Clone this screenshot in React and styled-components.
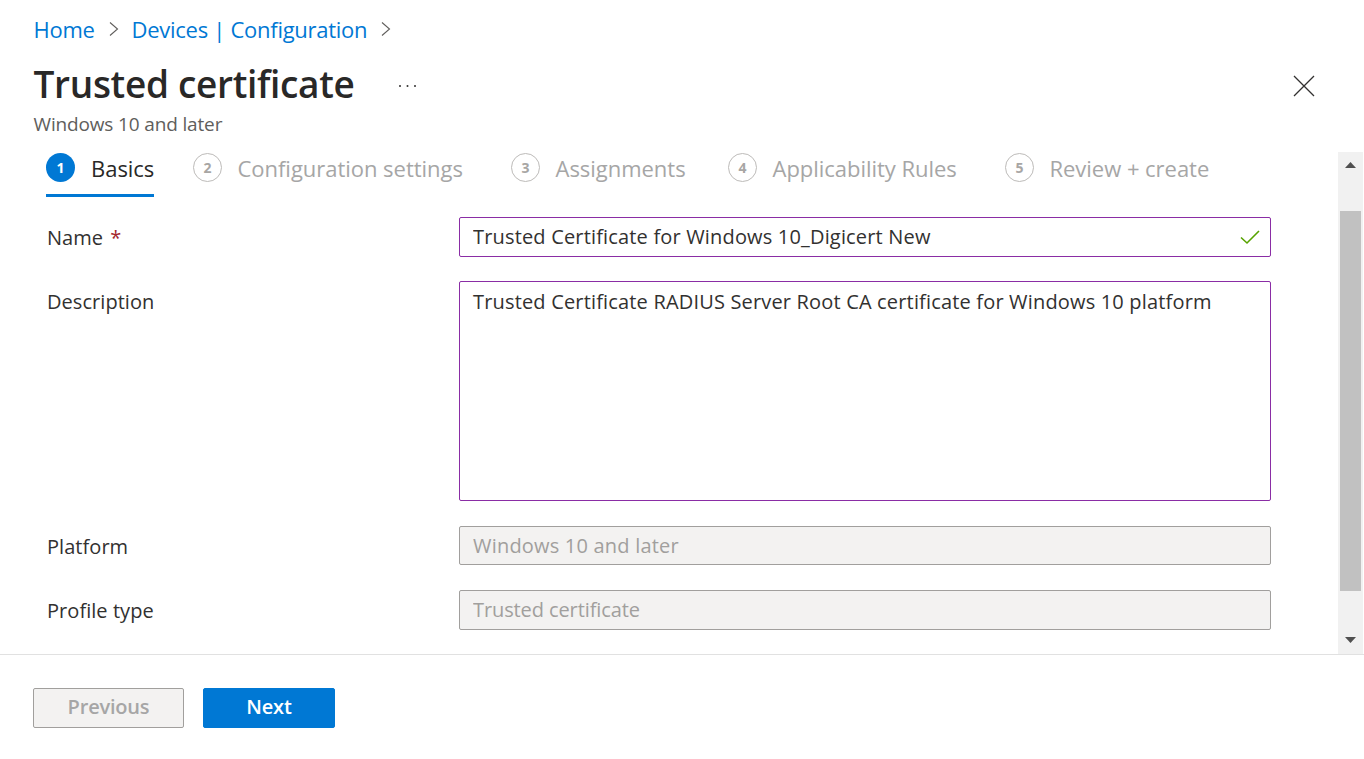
import React from "react"
import styled, { createGlobalStyle } from "styled-components"

const GlobalStyle = createGlobalStyle`
	html, body {
		margin: 0;
		padding: 0;
		background: #ffffff;
		font-family: "Open Sans", "Noto Sans", "Liberation Sans", sans-serif;
		color: #323130;
	}
	* {
		box-sizing: border-box;
	}
`

const Page = styled.div`
	width: 1364px;
	height: 759px;
	display: flex;
	flex-direction: column;
	overflow: hidden;
`

const Header = styled.header`
	height: 152px;
	padding: 14px 49px 0 33.5px;
	flex: none;
`

const Breadcrumb = styled.nav`
	display: flex;
	align-items: center;
	height: 30px;
	font-size: 22px;
	letter-spacing: -0.28px;
	color: #0078d4;
`

const Chevron = styled.svg`
	width: 12px;
	height: 18px;
	margin: 0 12px 0 13px;
	fill: none;
	stroke: #605e5c;
	stroke-width: 1.1;
`

const TitleRow = styled.div`
	display: flex;
	align-items: center;
	justify-content: space-between;
	height: 48px;
	margin-top: 16px;
`

const TitleGroup = styled.div`
	display: flex;
	align-items: center;
`

const Title = styled.h1`
	margin: 0;
	font-size: 37px;
	font-weight: 600;
	letter-spacing: -0.32px;
	line-height: 48px;
	color: #292827;
`

const MoreIcon = styled.svg`
	width: 20px;
	height: 6px;
	margin: 4px 0 0 43px;
	fill: #323130;
`

const CloseIcon = styled.svg`
	width: 22px;
	height: 22px;
	margin-top: 4px;
	stroke: #323130;
	stroke-width: 1.3;
`

const Subtitle = styled.div`
	margin-top: 3px;
	font-size: 19px;
	line-height: 26px;
	letter-spacing: -0.15px;
	color: #605e5c;
`

const Body = styled.div`
	flex: 1;
	min-height: 0;
	display: flex;
	padding-right: 1px;
`

const Content = styled.main`
	flex: 1;
	min-width: 0;
	padding-left: 46px;
`

const Steps = styled.div`
	display: flex;
	height: 45px;
`

const Step = styled.div`
	width: ${(p) => p.$width}px;
	margin-right: ${(p) => p.$gap}px;
	height: 45px;
	display: flex;
	align-items: flex-start;
	border-bottom: 3px solid ${(p) => (p.$active ? "#0078d4" : "transparent")};
`

const StepDot = styled.span`
	width: 29px;
	height: 29px;
	flex: none;
	margin-top: 1px;
	margin-right: ${(p) => (p.$active ? 16 : 15.5)}px;
	border-radius: 50%;
	display: flex;
	align-items: center;
	justify-content: center;
	font-size: 14px;
	font-weight: 700;
	color: ${(p) => (p.$active ? "#ffffff" : "#a8a6a4")};
	background: ${(p) => (p.$active ? "#0078d4" : "transparent")};
	border: ${(p) => (p.$active ? "none" : "1.5px solid #bdbbb9")};
`

const StepLabel = styled.span`
	font-size: 22px;
	line-height: 32px;
	letter-spacing: -0.03px;
	white-space: nowrap;
	color: ${(p) => (p.$active ? "#292827" : "#a6a6a6")};
`

const Form = styled.div`
	display: flex;
	flex-direction: column;
	padding-top: 20px;
`

const Row = styled.div`
	display: grid;
	grid-template-columns: 413px 812px;
	align-items: start;
	margin-bottom: ${(p) => p.$after}px;
`

const Label = styled.label`
	height: 39px;
	padding: 1px 0 0 1px;
	font-size: 20px;
	line-height: 40px;
	letter-spacing: 0.05px;
	color: #323130;
`

const Required = styled.span`
	color: #a4262c;
	margin-left: 7px;
`

const FieldWrap = styled.div`
	position: relative;
`

const Input = styled.input`
	display: block;
	width: 100%;
	height: ${(p) => p.$height || 40}px;
	padding: 0 13px ${(p) => (p.$height ? 0 : 2)}px;
	font: inherit;
	font-size: 20px;
	letter-spacing: ${(p) => p.$spacing ?? 0.17}px;
	border-radius: 2px;
	outline: none;
	color: ${(p) => (p.disabled ? "#a19f9d" : "#323130")};
	background: ${(p) => (p.disabled ? "#f3f2f1" : "#ffffff")};
	border: 1px solid ${(p) => (p.disabled ? "#a19f9d" : "#8a2da5")};
`

const TextArea = styled.textarea`
	display: block;
	width: 100%;
	height: 220px;
	padding: 6px 13px;
	font: inherit;
	font-size: 20px;
	line-height: 28px;
	letter-spacing: 0.17px;
	border-radius: 2px;
	outline: none;
	resize: none;
	overflow: hidden;
	color: #323130;
	border: 1px solid #8a2da5;
`

const Check = styled.svg`
	position: absolute;
	right: 11px;
	top: 12px;
	width: 20px;
	height: 16px;
	fill: none;
	stroke: #57a300;
	stroke-width: 1.6;
`

const Scrollbar = styled.div`
	width: 25px;
	flex: none;
	padding: 0 2px;
	background: #f1f1f1;
	display: flex;
	flex-direction: column;
`

const ScrollButton = styled.div`
	height: ${(p) => p.$height}px;
	flex: none;
	display: flex;
	justify-content: center;
	align-items: ${(p) => (p.$down ? "flex-end" : "flex-start")};
	padding: ${(p) => (p.$down ? "0 0 11px" : "10px 0 0")};
`

const Arrow = styled.svg`
	width: 11px;
	height: 6px;
	fill: #505050;
`

const Thumb = styled.div`
	height: 380px;
	flex: none;
	background: #c1c1c1;
`

const Footer = styled.footer`
	height: 105px;
	flex: none;
	border-top: 1px solid #e1e1e1;
	padding: 33px 33px 0;
	display: flex;
	gap: 19px;
	align-items: flex-start;
`

const Button = styled.button`
	width: ${(p) => p.$width}px;
	height: 40px;
	padding: 0 0 3px;
	border-radius: 2px;
	font: inherit;
	font-size: 20px;
	font-weight: 600;
	letter-spacing: -0.2px;
	color: ${(p) => (p.$primary ? "#ffffff" : "#a6a6a6")};
	background: ${(p) => (p.$primary ? "#0078d4" : "#f3f2f1")};
	border: 1px solid ${(p) => (p.$primary ? "#0078d4" : "#a19f9d")};
`

const steps = [
	{ n: 1, label: "Basics", width: 108, gap: 39, active: true },
	{ n: 2, label: "Configuration settings", width: 271, gap: 47 },
	{ n: 3, label: "Assignments", width: 174, gap: 43 },
	{ n: 4, label: "Applicability Rules", width: 230, gap: 47 },
	{ n: 5, label: "Review + create", width: 206, gap: 0 },
]

const Crumb = () => (
	<Chevron viewBox="0 0 12 18">
		<path d="M2 2.5 L9.5 9 L2 15.5" />
	</Chevron>
)

const App = () => (
	<>
		<GlobalStyle />
		<Page>
			<Header>
				<Breadcrumb>
					<span>Home</span>
					<Crumb />
					<span>Devices | Configuration</span>
					<Crumb />
				</Breadcrumb>
				<TitleRow>
					<TitleGroup>
						<Title>Trusted certificate</Title>
						<MoreIcon viewBox="0 0 20 6">
							<circle cx="2" cy="3" r="1" />
							<circle cx="9.5" cy="3" r="1" />
							<circle cx="17" cy="3" r="1" />
						</MoreIcon>
					</TitleGroup>
					<CloseIcon viewBox="0 0 22 22">
						<path d="M1 1 L21 21 M21 1 L1 21" />
					</CloseIcon>
				</TitleRow>
				<Subtitle>Windows 10 and later</Subtitle>
			</Header>
			<Body>
				<Content>
					<Steps>
						{steps.map((s) => (
							<Step key={s.n} $width={s.width} $gap={s.gap} $active={s.active}>
								<StepDot $active={s.active}>{s.n}</StepDot>
								<StepLabel $active={s.active}>{s.label}</StepLabel>
							</Step>
						))}
					</Steps>
					<Form>
						<Row $after={24}>
							<Label>
								Name<Required>*</Required>
							</Label>
							<FieldWrap>
								<Input readOnly value="Trusted Certificate for Windows 10_Digicert New" />
								<Check viewBox="0 0 20 16">
									<path d="M1 8.5 L7 14 L19 2" />
								</Check>
							</FieldWrap>
						</Row>
						<Row $after={25}>
							<Label>Description</Label>
							<TextArea readOnly value="Trusted Certificate RADIUS Server Root CA certificate for Windows 10 platform" />
						</Row>
						<Row $after={25}>
							<Label>Platform</Label>
							<Input disabled $height={39} $spacing={0.2} value="Windows 10 and later" />
						</Row>
						<Row $after={0}>
							<Label>Profile type</Label>
							<Input disabled $spacing={-0.1} value="Trusted certificate" />
						</Row>
					</Form>
				</Content>
				<Scrollbar>
					<ScrollButton $height={59}>
						<Arrow viewBox="0 0 11 6">
							<path d="M5.5 0 L11 6 L0 6 Z" />
						</Arrow>
					</ScrollButton>
					<Thumb />
					<ScrollButton $height={63} $down>
						<Arrow viewBox="0 0 11 6">
							<path d="M0 0 L11 0 L5.5 6 Z" />
						</Arrow>
					</ScrollButton>
				</Scrollbar>
			</Body>
			<Footer>
				<Button $width={151} disabled>Previous</Button>
				<Button $width={132} $primary>Next</Button>
			</Footer>
		</Page>
	</>
)

export default App
